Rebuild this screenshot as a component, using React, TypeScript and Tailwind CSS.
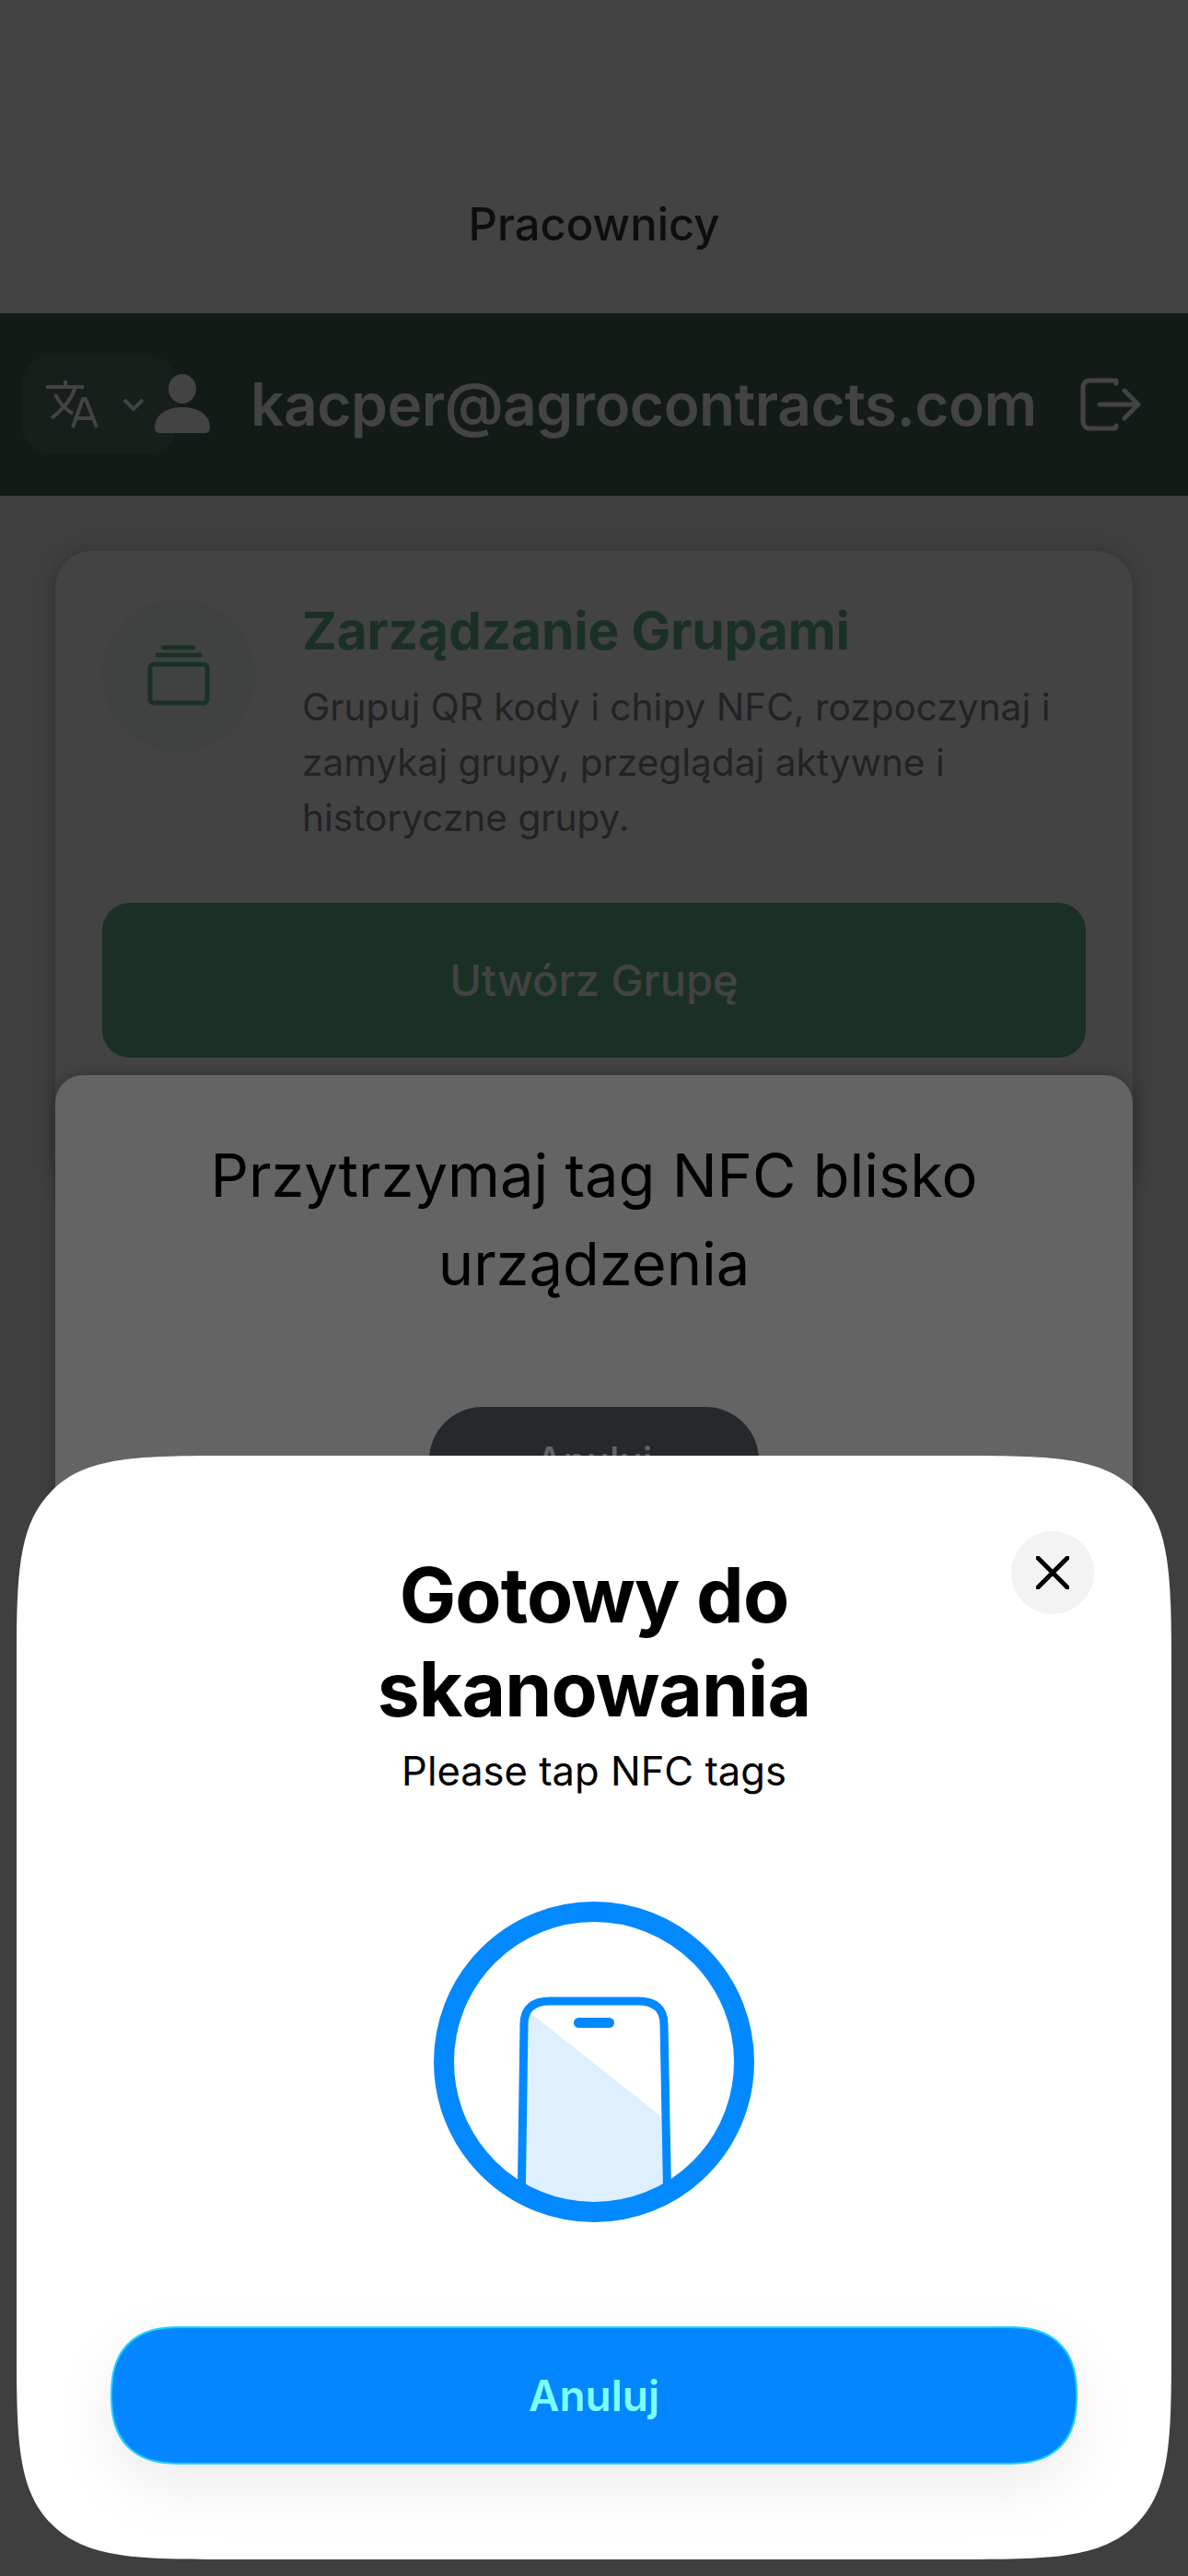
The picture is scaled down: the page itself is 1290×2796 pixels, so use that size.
import React from 'react';

const TranslateIcon = () => (
    <svg width="56" height="52" viewBox="0 0 56 52" fill="none" stroke="#434344" strokeWidth="4">
        <path d="M0 7H41M21 0V7M32 7C28 20 20 30 6 41M10 15C14 24 19 30 29 36" />
        <path d="M29 51L40 20H43L55 51M33 41H51" />
    </svg>
);

const PhoneIcon = () => (
    <svg width="348" height="350" viewBox="0 0 348 350" fill="none">
        <defs>
            <clipPath id="ring-clip">
                <circle cx="174" cy="175" r="164" />
            </clipPath>
        </defs>
        <g clipPath="url(#ring-clip)">
            <path d="M100 136C100 118 108 114 124 114H224C240 114 248 118 248 136L252 340H96Z" fill="#deeffe" />
            <path d="M105 122L248 235V136C248 118 240 114 224 114H124C114 114 108 116 105 122Z" fill="#fff" />
            <path
                d="M95 340L98 134C98 117 108 109 126 109H222C240 109 250 117 250 134L254 340"
                stroke="#0389ff"
                strokeWidth="9"
            />
            <rect x="152" y="127" width="44" height="11" rx="5.5" fill="#0389ff" />
        </g>
        <circle cx="174" cy="175" r="163" stroke="#0389ff" strokeWidth="22" />
    </svg>
);

export default function App() {
    return (
        <div className="relative h-[2796px] w-[1290px] overflow-hidden bg-[#3f3f3f] font-['Inter',sans-serif]">
            <div className="flex h-[340px] items-end justify-center bg-[#434344] pb-[67px]">
                <h1 className="text-[49px] leading-[58px] font-[550] text-[#0e0e10]">Pracownicy</h1>
            </div>

            <header className="flex h-[198px] items-center bg-[#121b15] pl-[24px]">
                <div className="flex h-[108px] w-[168px] items-center rounded-[32px] bg-[#161f1a] pl-[26px]">
                    <TranslateIcon />
                    <svg className="ml-[27px]" width="24" height="15" viewBox="0 0 24 15" fill="none" stroke="#434344" strokeWidth="4">
                        <path d="M2 2L12 12L22 2" />
                    </svg>
                </div>
                <svg className="ml-[-24px]" width="60" height="66" viewBox="0 0 60 66" fill="#434344">
                    <ellipse cx="30" cy="16" rx="15" ry="16" />
                    <path d="M0 58C0 44 13 36 30 36S60 44 60 58C60 62 58 64 54 64H6C2 64 0 62 0 58Z" />
                </svg>
                <span className="ml-[44px] text-[64px] leading-[76px] font-semibold tracking-[-0.5px] text-[#434344]">
                    kacper@agrocontracts.com
                </span>
                <svg className="ml-[47px]" width="66" height="58" viewBox="0 0 66 58" fill="none" stroke="#434344" strokeWidth="5" strokeLinecap="round" strokeLinejoin="round">
                    <path d="M36 3H11C6 3 3 6 3 11V47C3 52 6 55 11 55H36C38 55 39 54 39 52M39 6V3" />
                    <path d="M21 29H63M48 14L63 29L48 44" />
                </svg>
            </header>

            <section className="mx-[60px] mt-[60px] h-[700px] rounded-[40px] bg-[#434344] px-[51px] pt-[52px] shadow-[0_0_24px_rgba(0,0,0,0.2)]">
                <div className="flex gap-[51px]">
                    <div className="flex size-[166px] shrink-0 items-center justify-center rounded-full bg-[#3f4240]">
                        <svg width="68" height="66" viewBox="0 0 68 66" fill="none" stroke="#1a3024" strokeWidth="5" strokeLinecap="round">
                            <rect x="3" y="21" width="62" height="42" rx="4" />
                            <path d="M11 11H57M18 3H50" strokeWidth="5" />
                        </svg>
                    </div>
                    <div>
                        <h2 className="text-[57px] leading-[70px] font-bold tracking-[-0.2px] text-[#1a3024]">Zarządzanie Grupami</h2>
                        <p className="mt-[18px] w-[825px] text-[40.6px] leading-[60px] text-[#222223]">
                            Grupuj QR kody i chipy NFC, rozpoczynaj i zamykaj grupy, przeglądaj aktywne i historyczne grupy.
                        </p>
                    </div>
                </div>
                <button className="mt-[62px] flex h-[168px] w-full items-center justify-center rounded-[30px] bg-[#1a3024] text-[47px] font-medium text-[#434344]">
                    Utwórz Grupę
                </button>
            </section>

            <div className="absolute top-[1167px] left-[60px] flex h-[900px] w-[1170px] flex-col items-center rounded-[30px] bg-[#646464] px-[40px] pt-[61px] shadow-[0_0_16px_rgba(0,0,0,0.25)]">
                <p className="w-[900px] text-center text-[65px] leading-[96px] text-black">Przytrzymaj tag NFC blisko urządzenia</p>
                <button className="mt-[107px] h-[116px] w-[358px] rounded-[58px] bg-[#26292c] text-[42px] font-medium text-[#646464]">
                    Anuluj
                </button>
            </div>

            <div className="absolute top-[1580px] left-[18px] flex h-[1198px] w-[1254px] flex-col items-center rounded-[240px] bg-white pt-[101px] [corner-shape:squircle]">
                <button className="absolute top-[82px] right-[84px] flex size-[90px] items-center justify-center rounded-full bg-[#f3f3f3]">
                    <svg width="36" height="36" viewBox="0 0 36 36" fill="none" stroke="#000" strokeWidth="5" strokeLinecap="round">
                        <path d="M2 2L34 34M34 2L2 34" />
                    </svg>
                </button>
                <h2 className="w-[600px] text-center text-[82px] leading-[102px] font-bold tracking-[-0.9px] text-black">Gotowy do skanowania</h2>
                <p className="mt-[10px] text-[43.5px] leading-[54px] text-black">Please tap NFC tags</p>
                <div className="mt-[114px]">
                    <PhoneIcon />
                </div>
                <button className="mt-[112px] flex h-[150px] w-[1050px] items-center justify-center rounded-[75px] border-[2px] border-[#1cd0ff] bg-[#0386ff] text-[46px] font-semibold text-[#7dffff] shadow-[0_24px_70px_rgba(0,0,0,0.08)] [corner-shape:superellipse(1.3)]">
                    Anuluj
                </button>
            </div>
        </div>
    );
}
